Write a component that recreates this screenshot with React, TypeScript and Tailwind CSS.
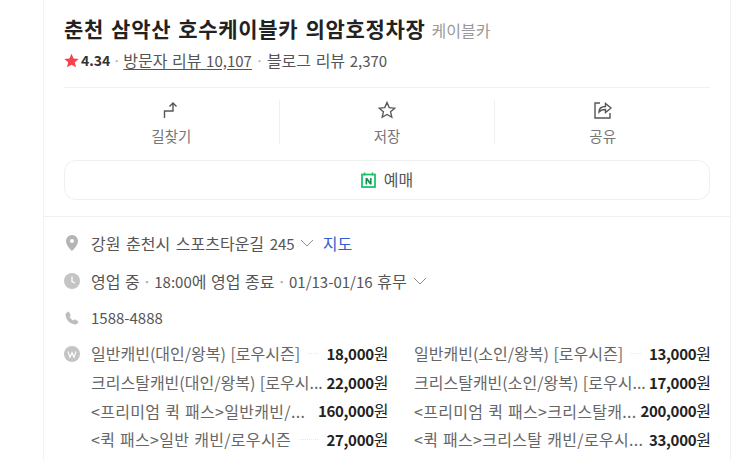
const font = { fontFamily: '"Noto Sans CJK KR", "Noto Sans", sans-serif' }

const prices = [
  ['일반캐빈(대인/왕복) [로우시즌]', '18,000', '일반캐빈(소인/왕복) [로우시즌]', '13,000'],
  ['크리스탈캐빈(대인/왕복) [로우시...', '22,000', '크리스탈캐빈(소인/왕복) [로우시...', '17,000'],
  ['<프리미엄 퀵 패스>일반캐빈/...', '160,000', '<프리미엄 퀵 패스>크리스탈캐...', '200,000'],
  ['<퀵 패스>일반 캐빈/로우시즌', '27,000', '<퀵 패스>크리스탈 캐빈/로우시...', '33,000'],
]

function Chevron() {
  return (
    <svg width="14" height="8" viewBox="0 0 14 8" fill="none" stroke="#8f8f8f" strokeWidth="1" className="shrink-0">
      <path d="M1 1l6 6 6-6" />
    </svg>
  )
}

function Num({ children }: { children: string }) {
  return <span className="text-[15px]">{children}</span>
}

function Dot() {
  return <span className="inline-block w-[14.5px] text-center text-[#aaa]">·</span>
}

function Price({ name, value }: { name: string; value: string }) {
  const dotted = !name.endsWith('...')
  return (
    <div className="flex h-[28.7px] items-center">
      <span className={`whitespace-nowrap text-[16px] text-[#666] [word-spacing:1px] ${name.startsWith('<') ? 'tracking-[0.3px]' : ''}`}>{name}</span>
      {dotted && <span className="mx-2 h-px flex-1 border-t border-dotted border-[#e8e8e8]" />}
      <span className="ml-auto whitespace-nowrap text-[15px] font-bold tracking-[-0.3px] text-[#222]">
        {value}
        <span className="text-[16px] font-normal tracking-normal">원</span>
      </span>
    </div>
  )
}

export default function App() {
  return (
    <div className="h-[460px] w-[743px] overflow-hidden bg-white" style={font}>
      <div className="ml-[43px] h-full w-[688px] border-x border-[#f2f2f2]">
        <div className="border-b border-[#f0f0f0] px-5 pb-4 pt-[12px]">
          <div className="flex items-baseline gap-[6px]">
            <h1 className="whitespace-nowrap text-[21px] font-bold leading-[32px] tracking-[0.7px] text-[#222] [word-spacing:1.6px]">
              춘천 삼악산 호수케이블카 의암호정차장
            </h1>
            <span className="whitespace-nowrap text-[16px] text-[#999]">케이블카</span>
          </div>
          <div className="mt-[3px] flex h-[26px] items-center whitespace-nowrap text-[16px] text-[#555] [word-spacing:1px]">
            <svg width="15" height="15" viewBox="0 0 24 24" fill="#f6424f" className="mr-[2px]">
              <path d="M12 1l3.300 7.600 8.200.8-6.200 5.400 1.900 8.100L12 18.600l-7.200 4.300 1.900-8.100L.5 9.400l8.200-.8z" />
            </svg>
            <b className="text-[14px] text-[#333]">4.34</b>
            <span className="mx-[2px] text-[#bbb]">·</span>
            <span className="underline underline-offset-2">
              방문자 리뷰 <Num>10,107</Num>
            </span>
            <span className="mx-[3px] text-[#bbb]">·</span>
            <span>
              블로그 리뷰 <Num>2,370</Num>
            </span>
          </div>
          <div className="mt-[14px] border-t border-[#f0f0f0] pt-[12px]">
            <div className="flex">
              <div className="flex h-[44px] flex-1 flex-col items-center justify-between">
                <svg width="20" height="20" viewBox="0 0 20 20" fill="none" stroke="#555" strokeWidth="1.4">
                  <path d="M3.500 18v-7H12V3M8.500 6.500L12 3l3.500 3.500" />
                </svg>
                <span className="text-[14.5px] leading-[16px] text-[#777]">길찾기</span>
              </div>
              <div className="flex h-[44px] flex-1 flex-col items-center justify-between border-x border-[#f0f0f0]">
                <svg width="20" height="20" viewBox="0 0 24 24" fill="none" stroke="#555" strokeWidth="1.6">
                  <path d="M12 3l2.700 6.100 6.600.7-5 4.400 1.500 6.500L12 17.300l-5.800 3.400 1.500-6.500-5-4.400 6.600-.7z" />
                </svg>
                <span className="text-[14.5px] leading-[16px] text-[#777]">저장</span>
              </div>
              <div className="flex h-[44px] flex-1 flex-col items-center justify-between">
                <svg width="20" height="20" viewBox="0 0 20 20" fill="none" stroke="#555" strokeWidth="1.4">
                  <path d="M7 3H2v15h15v-5" />
                  <path d="M6 12c0-4 3-5.500 6.500-5.500V3.500L18 8l-5.500 4.500V9.500C10 9.500 7.500 10 6 12z" />
                </svg>
                <span className="text-[14.5px] leading-[16px] text-[#777]">공유</span>
              </div>
            </div>
            <div className="mt-[16px] flex h-[40px] items-center justify-center gap-[8px] rounded-xl border border-[#efefef] text-[16px] text-[#555]">
              <svg width="15" height="16" viewBox="0 0 15 16">
                <rect x="1" y="2.500" width="13" height="12.500" fill="none" stroke="#1fc16b" strokeWidth="1.800" />
                <path d="M3.500 0.500v3M11.500 0.500v3" stroke="#1fc16b" strokeWidth="1.500" />
                <path d="M4.500 12.500V6h1.800L9 9.600V6h1.600v6.500H9L6.100 8.800v3.700z" fill="#148f50" />
              </svg>
              <span className="mb-[3px]">예매</span>
            </div>
          </div>
        </div>
        <div className="px-5 pt-[11px]">
          <div className="flex h-[30px] items-center text-[16px] text-[#555] [word-spacing:2px]">
            <svg width="14" height="16" viewBox="0 0 14 16" className="ml-[1px] mr-[12px] shrink-0">
              <path fillRule="evenodd" fill="#b4b4b4" d="M7 0a6 6 0 016 6c0 3.500-3.500 7.500-6 10C4.500 13.500 1 9.500 1 6a6 6 0 016-6zm0 4a2 2 0 100 4 2 2 0 000-4z" />
            </svg>
            <span>
              강원 춘천시 스포츠타운길 <Num>245</Num>
            </span>
            <span className="ml-[5px]">
              <Chevron />
            </span>
            <span className="ml-[9px] text-[#2f5fd0]">지도</span>
          </div>
          <div className="mt-[8px] flex h-[30px] items-center text-[16px] text-[#555] [word-spacing:1px]">
            <svg width="16" height="16" viewBox="0 0 16 16" className="mr-[11px] shrink-0">
              <circle cx="8" cy="8" r="8" fill="#c4c4c4" />
              <path d="M8 3.500V8.500l3 1.500" fill="none" stroke="#fff" strokeWidth="1.300" />
            </svg>
            <span>
              영업 중<Dot /><Num>18:00</Num>에 영업 종료<Dot /><Num>01/13-01/16</Num> 휴무
            </span>
            <span className="ml-[6px]">
              <Chevron />
            </span>
          </div>
          <div className="mt-[7px] flex h-[30px] items-center text-[16px] text-[#555]">
            <svg width="14" height="14" viewBox="0 0 24 24" fill="#bdbdbd" className="ml-[1px] mr-[12px] shrink-0">
              <path d="M6.600 1L10 7.500 7.800 10c1.200 2.600 3.300 4.800 6.200 6.200l2.500-2.200 6.500 3.400c-.4 3-2.500 5.600-5 5.600C9 23 1 15 1 6.500 1 4 3.600 1.400 6.600 1z" />
            </svg>
            <Num>1588-4888</Num>
          </div>
          <div className="mt-[6px] flex">
            <span className="mr-[11px] mt-[7px] flex h-[16px] w-[16px] shrink-0 items-center justify-center rounded-full bg-[#c4c4c4]">
              <svg width="10" height="7" viewBox="0 0 10 7" fill="none" stroke="#fff" strokeWidth="1.100">
                <path d="M1 0.500l2 6 2-5 2 5 2-6" />
              </svg>
            </span>
            <div className="grid grid-cols-[297.5px_297px] gap-x-[25.5px]">
              {prices.map((row) => (
                <div key={row[0]} className="contents">
                  <Price name={row[0]} value={row[1]} />
                  <Price name={row[2]} value={row[3]} />
                </div>
              ))}
            </div>
          </div>
        </div>
      </div>
    </div>
  )
}
